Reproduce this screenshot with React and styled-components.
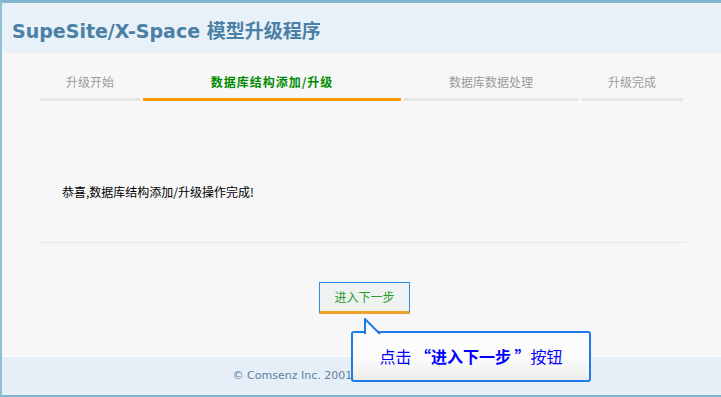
import styled, { createGlobalStyle } from "styled-components";

const GlobalStyle = createGlobalStyle`
  html, body {
    margin: 0;
    padding: 0;
    background: #ffffff;
  }
  body {
    font-family: "Noto Sans CJK SC", "DejaVu Sans", sans-serif;
  }
`;

const Frame = styled.div`
  position: relative;
  width: 721px;
  height: 397px;
  box-sizing: border-box;
  border-top: 3px solid #84b6cf;
  border-left: 2px solid #8fc0d3;
  border-bottom: 2px solid #7fb6c9;
  display: flex;
  flex-direction: column;
  overflow: hidden;
`;

const Header = styled.header`
  height: 50px;
  flex: none;
  background: #e8f0f8;
  display: flex;
  align-items: center;
  padding-left: 10px;
  padding-top: 2px;
  box-sizing: border-box;
`;

const Title = styled.h1`
  margin: 0;
  font-family: "DejaVu Sans", "Noto Sans CJK SC", sans-serif;
  font-weight: bold;
  font-size: 19px;
  color: #4b80a6;
`;

const Main = styled.main`
  flex: 1;
  background: #f7f7f7;
  border-bottom: 1px solid #ffffff;
  display: flex;
  flex-direction: column;
  padding: 19px 35px 0 38px;
`;

const Steps = styled.div`
  display: flex;
  gap: 3px;
`;

const Step = styled.div`
  width: ${(p) => p.$w}px;
  flex: none;
  text-align: center;
  font-size: 12px;
  line-height: 20px;
  padding-bottom: 6px;
  color: ${(p) => (p.$active ? "#008a00" : "#9a9a9a")};
  font-weight: ${(p) => (p.$active ? "bold" : "normal")};
  letter-spacing: ${(p) => (p.$active ? "1px" : "0")};
  border-bottom: 3px solid ${(p) => (p.$active ? "#ff9900" : "#e6e6e6")};
`;

const Message = styled.p`
  margin: 81px 0 0 22px;
  font-size: 12px;
  line-height: 20px;
  color: #000000;
`;

const Divider = styled.hr`
  margin: 40px 0 0 0;
  border: none;
  border-top: 1px solid #e6e6e6;
  height: 0;
`;

const ButtonRow = styled.div`
  display: flex;
  justify-content: center;
  margin-top: 39px;
  padding-left: 3px;
`;

const NextButton = styled.button`
  width: 91px;
  height: 32px;
  box-sizing: border-box;
  border: 1px solid #2f8ae8;
  border-bottom: 3px solid #f0a02c;
  outline: none;
  background: #eef2f0;
  color: #2b9b2b;
  font-family: "Noto Sans CJK SC", sans-serif;
  font-size: 12px;
  padding: 0 0 2px;
  cursor: pointer;
`;

const Footer = styled.footer`
  height: 38px;
  flex: none;
  background: #e6eff8;
  display: flex;
  align-items: center;
  justify-content: center;
  padding-bottom: 2px;
  box-sizing: border-box;
  font-family: "DejaVu Sans", sans-serif;
  font-size: 11px;
  color: #5d7f9e;
`;

const Callout = styled.div`
  position: absolute;
  left: 349px;
  top: 328px;
  width: 240px;
  height: 51px;
  box-sizing: border-box;
  border: 2px solid #1f7ae8;
  border-radius: 3px;
  background: linear-gradient(to bottom, #fdfdfe 0%, #fbfbfc 55%, #ecedea 100%);
  display: flex;
  align-items: center;
  justify-content: center;
  color: #0000ff;
  font-size: 16px;
  padding-bottom: 2px;
`;

const Pointer = styled.svg`
  position: absolute;
  left: 11px;
  top: -15px;
`;

const Strong = styled.b`
  font-weight: bold;
`;

const steps = [
  { label: "升级开始", w: 100 },
  { label: "数据库结构添加/升级", w: 258, active: true },
  { label: "数据库数据处理", w: 174 },
  { label: "升级完成", w: 102 },
];

export default function App() {
  return (
    <>
      <GlobalStyle />
      <Frame>
        <Header>
          <Title>SupeSite/X-Space 模型升级程序</Title>
        </Header>
        <Main>
          <Steps>
            {steps.map((s) => (
              <Step key={s.label} $w={s.w} $active={s.active}>
                {s.label}
              </Step>
            ))}
          </Steps>
          <Message>恭喜,数据库结构添加/升级操作完成!</Message>
          <Divider />
          <ButtonRow>
            <NextButton>进入下一步</NextButton>
          </ButtonRow>
        </Main>
        <Footer>© Comsenz Inc. 2001-2008 www.supesite.com</Footer>
        <Callout>
          <Pointer width="20" height="17" viewBox="0 0 20 17">
            <path d="M1 17 L1 1 L16 16 L16 17 Z" fill="#fdfdfe" />
            <path d="M1 16 L1 1 L16 16" fill="none" stroke="#1f7ae8" strokeWidth="2" />
          </Pointer>
          <span>
            点击 <Strong>“进入下一步 ”</Strong>按钮
          </span>
        </Callout>
      </Frame>
    </>
  );
}
